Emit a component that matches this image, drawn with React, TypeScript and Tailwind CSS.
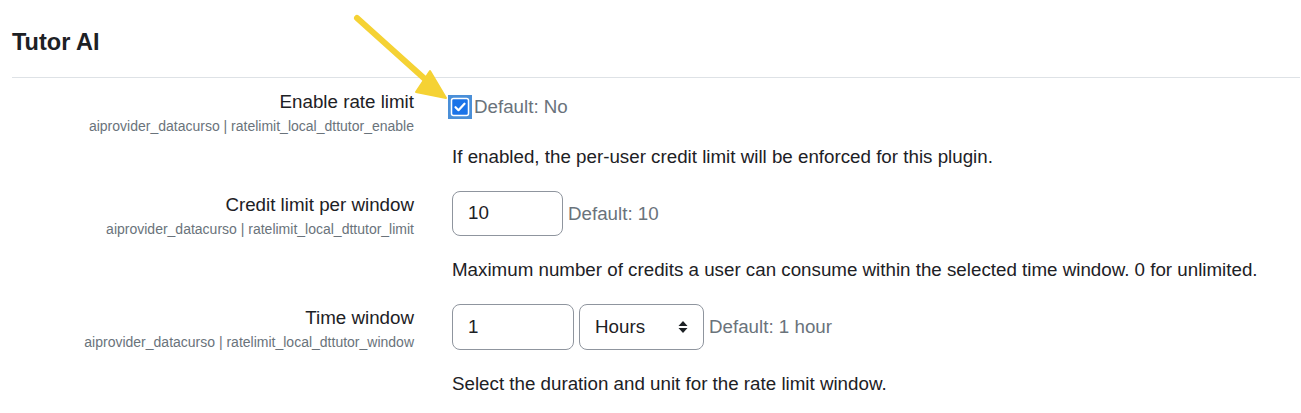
import React from "react";

type Row = {
  label: string;
  name: string;
};

function Label({ label, name }: Row) {
  return (
    <div className="w-[402px] shrink-0 text-right">
      <div className="text-[18.75px] leading-[28px] text-[#1d2125]">{label}</div>
      <div className="text-[14px] leading-[21px] text-[#6a737b]">{name}</div>
    </div>
  );
}

function CheckedBox() {
  return (
    <svg width="24" height="24" viewBox="0 0 24 24" className="block">
      <rect x="0" y="0" width="24" height="24" fill="#4a8fd8" />
      <rect x="3.5" y="3.5" width="17" height="17" rx="2" fill="#1a73e8" stroke="#ffffff" strokeWidth="1.5" />
      <path d="M7.5 12.2l3 3 6-6.5" fill="none" stroke="#ffffff" strokeWidth="2.2" strokeLinecap="round" strokeLinejoin="round" />
    </svg>
  );
}

function UpDown() {
  return (
    <svg width="10" height="14" viewBox="0 0 10 14" className="block">
      <path d="M5 1L9.5 6H0.5Z" fill="#1d2125" />
      <path d="M5 13L9.5 8H0.5Z" fill="#1d2125" />
    </svg>
  );
}

export default function App() {
  return (
    <div className="relative w-[1301px] h-[413px] overflow-hidden bg-white font-['Liberation_Sans',Arial,sans-serif] text-[#1d2125]">
      <div className="pl-[12px] pr-[1px]">
        <h2 className="pt-[28px] text-[23.5px] leading-[28px] font-bold">Tutor AI</h2>
        <div className="mt-[21px] h-px bg-[#dee2e6]" />

        {/* enable */}
        <div className="mt-[10px] flex gap-[38px]">
          <Label label="Enable rate limit" name="aiprovider_datacurso | ratelimit_local_dttutor_enable" />
          <div>
            <div className="pt-[5px] flex items-center gap-[2px] h-[33px]">
              <div className="-ml-[4px]">
                <CheckedBox />
              </div>
              <span className="text-[18.75px] leading-[28px] text-[#6a737b]">Default: No</span>
            </div>
            <p className="mt-[22px] mb-[20px] text-[18.75px] leading-[28px]">
              If enabled, the per-user credit limit will be enforced for this plugin.
            </p>
          </div>
        </div>

        {/* limit */}
        <div className="flex gap-[38px]">
          <Label label="Credit limit per window" name="aiprovider_datacurso | ratelimit_local_dttutor_limit" />
          <div>
            <div className="flex items-center gap-[5px]">
              <div className="h-[45px] w-[111px] rounded-[8px] border border-[#8f959e] pl-[15px] flex items-center text-[18.75px]">
                10
              </div>
              <span className="text-[18.75px] leading-[28px] text-[#6a737b]">Default: 10</span>
            </div>
            <p className="mt-[20px] mb-[20px] text-[18.75px] leading-[28px]">
              Maximum number of credits a user can consume within the selected time window. 0 for unlimited.
            </p>
          </div>
        </div>

        {/* window */}
        <div className="flex gap-[38px]">
          <Label label="Time window" name="aiprovider_datacurso | ratelimit_local_dttutor_window" />
          <div>
            <div className="flex items-center gap-[5px]">
              <div className="h-[46px] w-[122px] rounded-[8px] border border-[#8f959e] pl-[15px] flex items-center text-[18.75px]">
                1
              </div>
              <div className="h-[46px] w-[125px] rounded-[8px] border border-[#8f959e] pl-[15px] pr-[15px] flex items-center justify-between text-[18.75px]">
                <span>Hours</span>
                <UpDown />
              </div>
              <span className="text-[18.75px] leading-[28px] text-[#6a737b]">Default: 1 hour</span>
            </div>
            <p className="mt-[20px] text-[18.75px] leading-[28px]">
              Select the duration and unit for the rate limit window.
            </p>
          </div>
        </div>
      </div>

      {/* annotation arrow */}
      <svg className="absolute left-0 top-0 pointer-events-none" width="1301" height="413" viewBox="0 0 1301 413">
        <line x1="357" y1="18" x2="426" y2="80" stroke="#f5d234" strokeWidth="6" strokeLinecap="round" />
        <polygon points="446,98 416,92 430,71" fill="#f5d234" stroke="#f5d234" strokeWidth="2" strokeLinejoin="round" />
      </svg>
    </div>
  );
}
